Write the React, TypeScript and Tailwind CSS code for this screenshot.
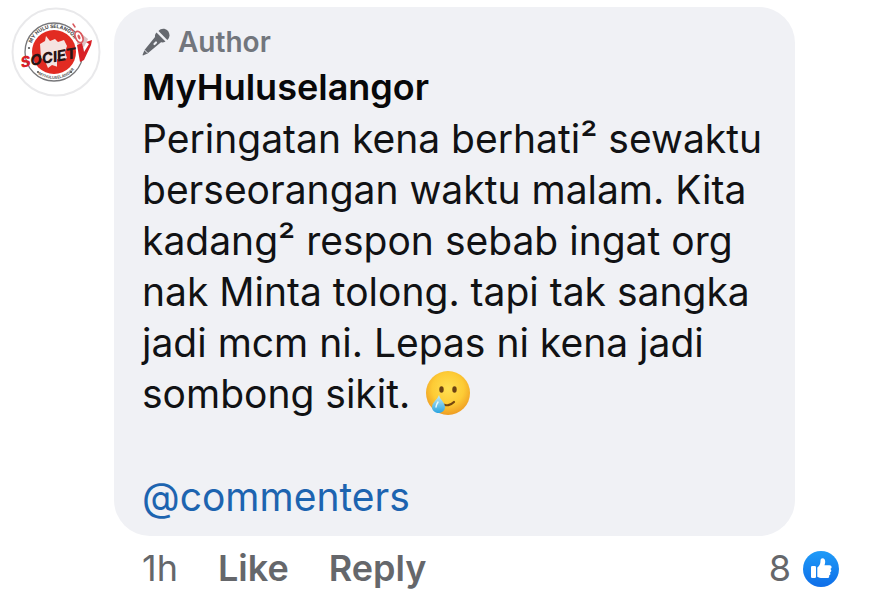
const message = [
  "Peringatan kena berhati² sewaktu",
  "berseorangan waktu malam. Kita",
  "kadang² respon sebab ingat org",
  "nak Minta tolong. tapi tak sangka",
  "jadi mcm ni. Lepas ni kena jadi",
];

function Avatar() {
  return (
    <svg viewBox="0 0 90 90" className="size-[90px] shrink-0" role="img" aria-label="MyHuluselangor">
      <defs>
        <path id="ring-top" d="M19 45a24 24 0 0 1 48 0" />
        <path id="ring-bottom" d="M16 45a27 27 0 0 0 54 0" />
      </defs>
      <circle cx="45" cy="45" r="43.500" fill="#fff" stroke="#e9e9eb" strokeWidth="2" />
      <circle cx="43" cy="45" r="29" fill="#fff" stroke="#77777a" strokeWidth="1.300" />
      <circle cx="43" cy="45" r="22" fill="#e22b22" />
      <path
        d="M29 37l5-3 1-5 4 5 5-2 3 3 6-2 3 6-2 6 2 6-6 3-3 6-6-2-4 3-3-7-4-3z"
        fill="#f5e3e0"
      />
      <path d="M46 52l9 1-3 6-6 2z" fill="#e22b22" />
      <text fontFamily="Inter, sans-serif" fontSize="5" fontWeight="800" fill="#555">
        <textPath href="#ring-top" startOffset="12%">MY HULU SELANGOR</textPath>
      </text>
      <text fontFamily="Inter, sans-serif" fontSize="4" fontWeight="700" fill="#666">
        <textPath href="#ring-bottom" startOffset="30%">MYHULUSELANGOR</textPath>
      </text>
      <circle cx="18" cy="41" r="1.100" fill="#555" />
      <circle cx="27" cy="65" r="1.100" fill="#555" />
      <circle cx="60" cy="65" r="1.100" fill="#555" />
      <path d="M66 26l6 2 5 4-4 8-7-3z" fill="#dcc3c5" />
      <ellipse cx="68" cy="30" rx="3.500" ry="6" transform="rotate(-24 68 30)" fill="#fff" stroke="#d9575c" strokeWidth="1.800" />
      <ellipse cx="68" cy="30" rx="1.300" ry="2.500" transform="rotate(-24 68 30)" fill="#d9575c" />
      <path d="M60 22l2 2M62 17l2 3" stroke="#d9575c" strokeWidth="1.500" strokeLinecap="round" />
      <g
        transform="rotate(-10 43 50)"
        fontFamily="Inter, sans-serif"
        fontSize="15"
        fontWeight="800"
        fontStyle="italic"
      >
        <text x="9" y="55" fill="#d92127">S</text>
        <text x="19" y="55" fill="#2a1516">OCIET</text>
      </g>
      <path d="M66 38l5-2 2 9 5-8-3-2 6-2-1 5-7 15-4 2z" fill="#d92127" />
    </svg>
  );
}

function MicIcon() {
  return (
    <svg viewBox="0 0 28 28" className="size-7" aria-hidden="true">
      <g fill="#65686e">
        <path d="M16.500 3c2.500-3 6.500-3 9-.500s2.800 7-.200 9.500z" />
        <path d="M14.500 4.500l9 9c-1.500.900-3 1-4.500.800L5.500 25.500l-4.500 2-.500-.500L2.500 22 13 9c-.200-1.700.300-3.300 1.500-4.500z" />
      </g>
      <path d="M12.500 16l1.500-1.500" stroke="#f0f1f5" strokeWidth="2.200" strokeLinecap="round" />
      <path d="M2.500 22l3 3" stroke="#f0f1f5" strokeWidth="1" />
    </svg>
  );
}

function TearEmoji() {
  return (
    <svg viewBox="0 0 46 46" className="ml-1 -mt-2 inline-block size-[46px] align-middle" role="img" aria-label="Smiling face with tear">
      <defs>
        <radialGradient id="face" cx=".5" cy=".4" r=".6">
          <stop offset="0" stopColor="#ffe052" />
          <stop offset=".6" stopColor="#fdcb35" />
          <stop offset="1" stopColor="#ee9c23" />
        </radialGradient>
        <linearGradient id="tear" x1="0" y1="0" x2="0" y2="1">
          <stop offset="0" stopColor="#c9edf5" />
          <stop offset="1" stopColor="#2aa4e0" />
        </linearGradient>
      </defs>
      <circle cx="23" cy="23" r="22" fill="url(#face)" />
      <ellipse cx="16.500" cy="19.500" rx="2.200" ry="3.300" fill="#6b4213" />
      <ellipse cx="29.500" cy="19.500" rx="2.200" ry="3.300" fill="#6b4213" />
      <path d="M17 34c4 2.500 9 1 12-2" fill="none" stroke="#74460f" strokeWidth="2.200" strokeLinecap="round" />
      <path d="M14 25c1 4.500 6 7.500 6 12 0 3.500-3 6-6.500 6S7 40.500 7 37c0-4.500 5.500-7.500 7-12z" fill="url(#tear)" />
      <path d="M11 37c0-2 1-3.500 2-5" fill="none" stroke="#e8f8fc" strokeWidth="1.500" strokeLinecap="round" />
    </svg>
  );
}

function LikeBadge() {
  return (
    <svg viewBox="0 0 36 36" className="size-9" role="img" aria-label="Like reactions">
      <defs>
        <linearGradient id="badge" x1="0" y1="0" x2="0" y2="1">
          <stop offset="0" stopColor="#1f9bf8" />
          <stop offset="1" stopColor="#0f6ee8" />
        </linearGradient>
      </defs>
      <circle cx="18" cy="18" r="18" fill="url(#badge)" />
      <rect x="8" y="15" width="5" height="12" rx="1.300" fill="#fff" />
      <path
        d="M14.300 16.500c2.200-1.700 3.200-3.700 3.200-6.800 0-1.600.700-2.500 2-2.500 1.900 0 2.700 1.700 2.700 3.600 0 1.300-.300 2.400-.700 3.400h5c1.300 0 2.100.900 2.100 1.900 0 .900-.500 1.600-1.200 1.900.500.400.9.900.9 1.600 0 .900-.600 1.700-1.400 1.900.3.400.5.800.5 1.300 0 .9-.6 1.600-1.400 1.800.1.300.2.500.2.800 0 1-.800 1.700-2 1.700h-4.900c-2 0-3.700-.500-5-1.400z"
        fill="#fff"
      />
    </svg>
  );
}

export default function App() {
  return (
    <main className="min-h-screen bg-white pt-[7px] pr-9 pl-[11px] font-['Inter',sans-serif]">
      <article className="flex items-start gap-[13px]">
        <Avatar />
        <div className="min-w-0 flex-1">
          <div className="mr-11 rounded-[36px] bg-[#f0f1f5] px-7 pt-4 pb-[14px] text-[39px] leading-[51px] text-[#111214]">
            <div className="flex items-center gap-2 text-[28px] leading-[38px] font-semibold text-[#72767d]">
              <MicIcon />
              <span>Author</span>
            </div>
            <h1 className="text-[36px] leading-[52px] font-semibold text-[#080809]">MyHuluselangor</h1>
            <p className="whitespace-nowrap">
              {message.map((line) => (
                <span key={line} className="block">{line}</span>
              ))}
              <span className="block h-[52px]">
                sombong sikit. <TearEmoji />
              </span>
            </p>
            <a href="#commenters" className="mt-[51px] block w-fit text-[#1d64b0]">@commenters</a>
          </div>
          <footer className="flex items-center justify-between pt-[7px] pl-7 text-[36px] leading-[51px] text-[#65676b]">
            <div className="flex items-center gap-10">
              <span>1h</span>
              <button type="button" className="font-semibold">Like</button>
              <button type="button" className="font-semibold">Reply</button>
            </div>
            <div className="flex items-center gap-3">
              <span>8</span>
              <LikeBadge />
            </div>
          </footer>
        </div>
      </article>
    </main>
  );
}
